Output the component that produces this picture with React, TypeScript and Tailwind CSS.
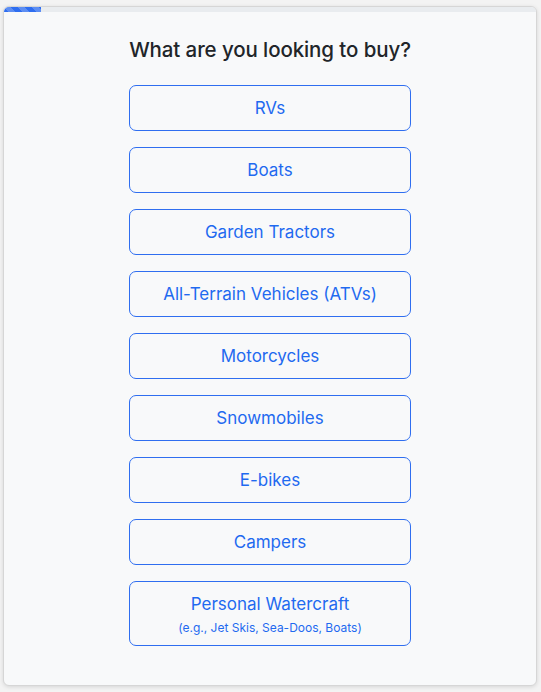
import React from "react";

const items = [
  "RVs",
  "Boats",
  "Garden Tractors",
  "All-Terrain Vehicles (ATVs)",
  "Motorcycles",
  "Snowmobiles",
  "E-bikes",
  "Campers",
];

export default function App() {
  return (
    <div
      className="w-[541px] h-[692px] bg-[#f3f3f3] pt-[6px] pl-[3px] pr-[4px] pb-[6px]"
      style={{ fontFamily: "Inter, 'Noto Sans', sans-serif" }}
    >
      <div className="h-[680px] w-[534px] bg-[#f8f9fa] border border-[#d6d6d6] rounded-[6px] shadow-[0_1px_4px_rgba(0,0,0,0.12)] overflow-hidden flex flex-col">
        <div className="h-[5px] bg-[#e9ecef] w-full">
          <div
            className="h-full w-[37px]"
            style={{
              backgroundColor: "#2f6ef0",
              backgroundImage:
                "linear-gradient(45deg, rgba(255,255,255,.22) 25%, transparent 25%, transparent 50%, rgba(255,255,255,.22) 50%, rgba(255,255,255,.22) 75%, transparent 75%, transparent)",
              backgroundSize: "14px 14px",
            }}
          />
        </div>
        <div className="flex flex-col items-center pt-[26px]">
          <h2 className="text-[20.5px] leading-[24px] font-medium text-[#212529] tracking-[-0.1px]">
            What are you looking to buy?
          </h2>
          <div className="flex flex-col gap-[16px] mt-[23px] w-[282px]">
            {items.map((t) => (
              <button
                key={t}
                className="h-[46px] w-full border border-[#2f6ef0] rounded-[7px] text-[#1f6af0] text-[17px] leading-[20px] bg-transparent"
              >
                {t}
              </button>
            ))}
            <button className="h-[65px] w-full border border-[#2f6ef0] rounded-[7px] text-[#1f6af0] bg-transparent flex flex-col items-center justify-start pt-[12px]">
              <span className="text-[17px] leading-[20px]">Personal Watercraft</span>
              <span className="text-[12px] leading-[14px] mt-[7px]">(e.g., Jet Skis, Sea-Doos, Boats)</span>
            </button>
          </div>
        </div>
      </div>
    </div>
  );
}
